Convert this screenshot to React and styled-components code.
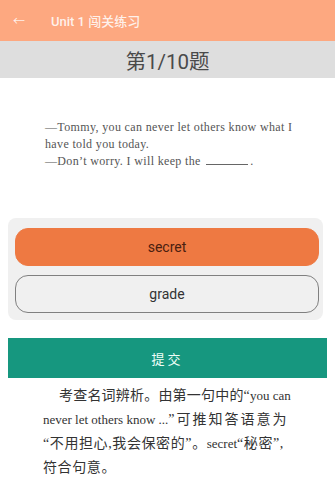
import React from 'react';
import styled, { createGlobalStyle } from 'styled-components';

const GlobalStyle = createGlobalStyle`
    html, body {
        margin: 0;
        padding: 0;
        background: #fff;
    }
    body {
        font-family: Roboto, "Noto Sans CJK SC", sans-serif;
    }
`;

const Page = styled.div`
    width: 335px;
    height: 502px;
    overflow: hidden;
    background: #fff;
`;

const Header = styled.div`
    height: 41px;
    background: #fda880;
    display: flex;
    align-items: center;
    padding-left: 13px;
    gap: 26px;
    color: rgba(255,255,255,0.85);
    box-sizing: border-box;
`;

const Back = styled.span`
    font-size: 12px;
    width: 12px;
    text-align: center;
`;

const HeaderTitle = styled.span`
    font-size: 13px;
    font-weight: 500;
`;

const CountBar = styled.div`
    height: 37px;
    background: #dedede;
    display: flex;
    align-items: center;
    justify-content: center;
    font-size: 20.5px;
    color: #4a4a4a;
`;

const Question = styled.div`
    padding: 41px 30px 0 45px;
    height: 140px;
    box-sizing: border-box;
    font-family: "Liberation Serif", serif;
    font-size: 12px;
    letter-spacing: 0.35px;
    line-height: 17px;
    color: #555;
`;

const Blank = styled.span`
    display: inline-block;
    width: 42px;
    border-bottom: 1px solid #666;
    margin: 0 2px;
    height: 10px;
`;

const Options = styled.div`
    margin: 0 12px 0 8px;
    padding: 10px 4px 7px 7px;
    background: #f0f0f0;
    border-radius: 8px;
    display: flex;
    flex-direction: column;
    gap: 9px;
`;

const Option = styled.div`
    height: 36px;
    border-radius: 13px;
    display: flex;
    align-items: center;
    justify-content: center;
    font-size: 14px;
    color: ${p => (p.selected ? '#4a2010' : '#333')};
    background: ${p => (p.selected ? '#ee7942' : '#f0f0f0')};
    border: 1px solid ${p => (p.selected ? '#ee7942' : '#808080')};
`;

const Submit = styled.div`
    margin: 18px 8px 0 8px;
    height: 40px;
    background: #16977f;
    color: #f0fff8;
    display: flex;
    align-items: center;
    justify-content: center;
    font-size: 13px;
    letter-spacing: 3px;
    font-family: "Noto Sans CJK SC", sans-serif;
`;

const Analysis = styled.div`
    padding: 6px 30px 0 43px;
    font-family: "Liberation Serif", "Noto Sans CJK SC", serif;
    font-size: 14px;
    line-height: 24px;
    color: #333;
    white-space: nowrap;
`;

const Indent = styled.span`
    display: inline-block;
    width: 16px;
`;

const Cjk = styled.span`
    letter-spacing: ${p => p.$spacing || '0.6px'};
`;

const Latin = styled.span`
    font-size: 13px;
`;

export default function App() {
    return (
        <Page>
            <GlobalStyle />
            <Header>
                <Back>←</Back>
                <HeaderTitle>Unit 1 闯关练习</HeaderTitle>
            </Header>
            <CountBar>第1/10题</CountBar>
            <Question>
                —Tommy, you can never let others know what I have told you today.
                <br />
                —Don’t worry. I will keep the <Blank />.
            </Question>
            <Options>
                <Option selected>secret</Option>
                <Option>grade</Option>
            </Options>
            <Submit>提交</Submit>
            <Analysis>
                <Indent />
                <Cjk $spacing="0.2px">考查名词辨析。由第一句中的“</Cjk><Latin>you can</Latin>
                <br />
                <Latin>never let others know ...</Latin><Cjk $spacing="2px">”可推知答语意为</Cjk>
                <br />
                <Cjk>“不用担心,我会保密的”。</Cjk><Latin>secret</Latin><Cjk>“秘密”,</Cjk>
                <br />
                <Cjk>符合句意。</Cjk>
            </Analysis>
        </Page>
    );
}
